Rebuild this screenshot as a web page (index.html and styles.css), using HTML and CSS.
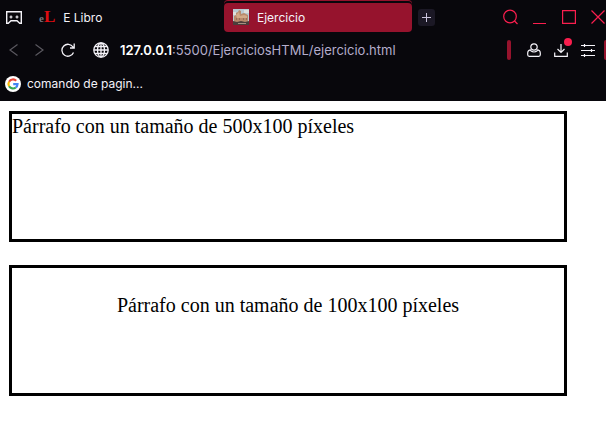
FILE: index.html
```html
<!DOCTYPE html>
<html lang="es">
<head>
    <meta charset="UTF-8">
    <meta name="viewport" content="width=device-width, initial-scale=1.0">
    <title>Ejercicio</title>
    <link rel="stylesheet" href="styles.css">
</head>
<body>
    <header class="browser">
        <div class="tab-bar">
            <button class="icon-btn menu" aria-label="Menu">
                <svg width="16" height="13" viewBox="0 0 16 13" fill="none" stroke="#f4f2f8" stroke-width="1.400">
                    <path d="M.7.700h14.600v11.600h-1.600L11 9.800H5l-2.700 2.500H.7z"/>
                    <path d="M3.500 6h3M5 4.500v3M9.500 6h3M11 4.500v3" stroke-width="1.200"/>
                </svg>
            </button>
            <button class="tab">
                <span class="logo-libro"><span class="logo-e">e</span>L</span>
                <span>E Libro</span>
            </button>
            <button class="tab active">
                <svg width="16" height="16" viewBox="0 0 16 16">
                    <path fill="#b9cbd3" d="M0 0h16v16H0z"/>
                    <path fill="#dde0dd" d="M0 3h3v3H0zM11 1h5v3h-5z"/>
                    <path fill="#b98b6c" d="M1 13V7l2-1V4l2-1 1-2 2 1v3l3-1 4 2v7z"/>
                    <path fill="#d3ab88" d="M3 6l3-3 1 4 4-1 3 1v2H4z"/>
                    <path fill="#97705a" d="M3 9h1v2H3zM6 9h1v2H6zM10 9h1v2h-1zM13 9h1v2h-1z"/>
                    <path fill="#4b3e3b" d="M0 12l4 1 4-1 4 1 4-1v4H0z"/>
                    <path fill="#a69080" d="M5 14h8v1H5z"/>
                </svg>
                <span>Ejercicio</span>
            </button>
            <button class="new-tab" aria-label="Nueva pestaña">
                <svg width="9" height="9" viewBox="0 0 9 9" stroke="#c9c3dc" stroke-width="1"><path d="M4.500 0v9M0 4.500h9"/></svg>
            </button>
            <div class="window-controls">
                <button class="icon-btn" aria-label="Buscar">
                    <svg width="16" height="16" viewBox="0 0 16 16" fill="none" stroke="#fa1e4e" stroke-width="1.200"><circle cx="8" cy="7.500" r="6.300"/><path d="M12.500 12l3 3"/></svg>
                </button>
                <button class="icon-btn" aria-label="Minimizar">
                    <svg width="14" height="16" viewBox="0 0 14 16" stroke="#fa1e4e"><path d="M0 14.500h13"/></svg>
                </button>
                <button class="icon-btn" aria-label="Maximizar">
                    <svg width="14" height="14" viewBox="0 0 14 14" fill="none" stroke="#fa1e4e" stroke-width="1.200"><path d="M.6.6h12.800v12.800H.6z"/></svg>
                </button>
                <button class="icon-btn" aria-label="Cerrar">
                    <svg width="14" height="14" viewBox="0 0 14 14" stroke="#fa1e4e" stroke-width="1.200"><path d="M.5.5l13 13M13.500.5l-13 13"/></svg>
                </button>
            </div>
        </div>

        <div class="address-bar">
            <div class="nav">
                <button class="icon-btn" aria-label="Atrás">
                    <svg width="9" height="12" viewBox="0 0 9 12" fill="none" stroke="#5b5960" stroke-width="1.200"><path d="M8.500.5L1 6l7.500 5.500"/></svg>
                </button>
                <button class="icon-btn" aria-label="Adelante">
                    <svg width="9" height="12" viewBox="0 0 9 12" fill="none" stroke="#5b5960" stroke-width="1.200"><path d="M.5.5L8 6 .5 11.500"/></svg>
                </button>
                <button class="icon-btn" aria-label="Recargar">
                    <svg width="14" height="14" viewBox="0 0 14 14" fill="none" stroke="#f4f2f8" stroke-width="1.300"><path d="M12.500 9.500A6 6 0 1 1 12 4L13 5M13.200.5V5H9"/></svg>
                </button>
            </div>
            <svg class="globe" width="16" height="16" viewBox="0 0 16 16" fill="none" stroke="#f4f2f8" stroke-width="1.300">
                <circle cx="8" cy="8" r="7.200"/>
                <ellipse cx="8" cy="8" rx="3.500" ry="7"/>
                <path d="M8 1v14M1 8h14M2 4.500h12M2 11.500h12"/>
            </svg>
            <a class="url" href="#"><span class="host">127.0.0.1</span>:5500/EjerciciosHTML/ejercicio.html</a>
            <div class="tools">
                <span class="separator"></span>
                <button class="icon-btn" aria-label="Perfil">
                    <svg width="14" height="14" viewBox="0 0 14 14" fill="none" stroke="#f4f2f8" stroke-width="1.200"><circle cx="7" cy="4" r="3.200"/><path d="M4 6.800C1.800 6.800.7 8.300.7 10v1.800q0 1.500 1.500 1.500h9.600q1.500 0 1.500-1.500V10c0-1.700-1.100-3.200-3.300-3.200M3.500 7.500q3.500 3 7 0"/></svg>
                </button>
                <button class="icon-btn downloads" aria-label="Descargas">
                    <svg width="14" height="14" viewBox="0 0 14 14" fill="none" stroke="#f4f2f8" stroke-width="1.200"><path d="M7 1v8.500M3.500 6L7 9.500 10.500 6M.7 9.500v3.800h12.600V9.500"/></svg>
                    <span class="dot"></span>
                </button>
                <button class="icon-btn" aria-label="Ajustes">
                    <svg width="14" height="14" viewBox="0 0 14 14" stroke="#f4f2f8" stroke-width="1.200"><path d="M0 2.500h14M0 7.500h14M0 12.500h14M3.500 1v3M10.500 6v3M3.500 11v3"/></svg>
                </button>
                <span class="separator edge"></span>
            </div>
        </div>

        <nav class="bookmarks">
            <a class="bookmark" href="#">
                <svg width="16" height="16" viewBox="0 0 16 16" fill="none" stroke-width="2.200">
                    <circle cx="8" cy="8" r="8" fill="#fff"/>
                    <path stroke="#ea4335" d="M11.200 4.800A4.500 4.500 0 0 0 4.100 5.700"/>
                    <path stroke="#fbbc05" d="M4.100 5.700a4.500 4.500 0 0 0 0 4.600"/>
                    <path stroke="#34a853" d="M4.100 10.300a4.500 4.500 0 0 0 6.700 1.200"/>
                    <path stroke="#4285f4" d="M10.800 11.500A4.500 4.500 0 0 0 12.500 8.200H8.200"/>
                </svg>
                <span>comando de pagin...</span>
            </a>
        </nav>
    </header>

    <main class="page">
        <p class="box">Párrafo con un tamaño de 500x100 píxeles</p>
        <p class="box centered">Párrafo con un tamaño de 100x100 píxeles</p>
    </main>
</body>
</html>
```
FILE: styles.css
```css
* {
    box-sizing: border-box;
}

body {
    margin: 0;
    background-color: #fff;
}

button {
    padding: 0;
    border: none;
    background: none;
    color: inherit;
    font: inherit;
    cursor: pointer;
}

a {
    color: inherit;
    text-decoration: none;
}

svg {
    display: block;
    flex: none;
}

.browser {
    background-color: #08070c;
    color: #f4f2f8;
    font-family: Inter, sans-serif;
    font-size: 12px;
    overflow: hidden;
}

.tab-bar,
.address-bar,
.bookmarks {
    display: flex;
    align-items: center;
}

.tab-bar {
    height: 34px;
    padding-left: 6px;
}

.icon-btn {
    flex: none;
}

.menu {
    margin-right: 8px;
}

.tab {
    display: flex;
    align-items: center;
    gap: 8px;
    flex: 0 1 188px;
    height: 29px;
    padding: 0 9px;
    margin-right: 6px;
    border-radius: 4px;
}

.tab.active {
    background-color: #96132d;
    box-shadow: 0 -2px #08070c, 0 -3px #96132d;
}

.logo-libro {
    color: #e00b10;
    font: bold 17px/16px "Liberation Serif", serif;
}

.logo-e {
    color: #77757b;
    font-size: 11px;
}

.new-tab {
    display: flex;
    align-items: center;
    justify-content: center;
    flex: none;
    width: 17px;
    height: 17px;
    border-radius: 3px;
    background-color: #1b1825;
}

.window-controls {
    display: flex;
    align-items: center;
    gap: 15px;
    margin-left: auto;
    margin-right: 1px;
}

.address-bar {
    height: 32px;
    padding-left: 9px;
}

.nav {
    display: flex;
    align-items: center;
    gap: 17px;
}

.globe {
    margin: 0 11px 0 18px;
}

.url {
    color: #b4adcb;
    font-size: 13px;
}

.host {
    color: #fff;
    font-weight: 600;
}

.tools {
    display: flex;
    align-items: center;
    gap: 13px;
    margin-left: auto;
    margin-right: -2px;
}

.separator {
    width: 4px;
    height: 20px;
    margin-right: 3px;
    border-radius: 2px;
    background-color: #96132d;
}

.separator.edge {
    margin: 0 0 0 -4px;
}

.downloads {
    position: relative;
}

.dot {
    position: absolute;
    top: -5px;
    right: -4px;
    width: 8px;
    height: 8px;
    border-radius: 50%;
    background-color: #fa1e4e;
}

.bookmarks {
    height: 35px;
    padding-left: 5px;
}

.bookmark {
    display: flex;
    align-items: center;
    gap: 6px;
}

.page {
    padding: 10px 9px;
    font-family: "Liberation Serif", "Times New Roman", serif;
    font-size: 20px;
    line-height: 24px;
    color: #000;
}

.box {
    max-width: 558px;
    min-height: 131px;
    margin: 0 0 23px;
    border: 3px solid #000;
}

.centered {
    padding: 25px;
    text-align: center;
}
```
